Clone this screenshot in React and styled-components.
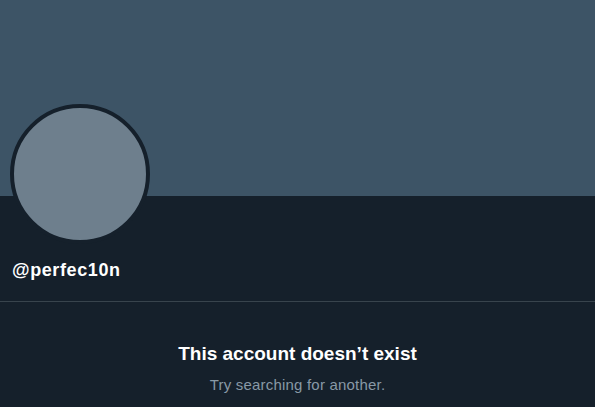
import styled, { createGlobalStyle } from "styled-components"

const Global = createGlobalStyle`
  body {
    margin: 0;
    background: #15202b;
    font-family: "Liberation Sans", Arial, sans-serif;
  }
`;

const Page = styled.div`
  width: 595px;
  height: 407px;
  background: #15202b;
  overflow: hidden;
`;

const Banner = styled.div`
  height: 196px;
  background: #3d5466;
`;

const Header = styled.div`
  padding: 0 10px 0 10px;
`;

const Avatar = styled.div`
  width: 132px;
  height: 132px;
  margin-top: -92px;
  border-radius: 50%;
  border: 4px solid #15202b;
  background: #6e7f8d;
`;

const Handle = styled.div`
  margin: 16px 0 0 2px;
  color: #ffffff;
  font-size: 18px;
  font-weight: 700;
  letter-spacing: 0.6px;
  line-height: 20px;
`;

const Divider = styled.div`
  margin-top: 21px;
  height: 1px;
  background: #38444d;
`;

const Empty = styled.div`
  display: flex;
  flex-direction: column;
  align-items: center;
  padding-top: 41px;
`;

const Title = styled.h2`
  margin: 0;
  color: #ffffff;
  font-size: 19px;
  font-weight: 700;
  line-height: 22px;
`;

const Sub = styled.p`
  margin: 11px 0 0;
  color: #8899a6;
  font-size: 15px;
  letter-spacing: 0.2px;
  line-height: 18px;
`;

function App() {
  return (
    <Page>
      <Global />
      <Banner />
      <Header>
        <Avatar />
        <Handle>@perfec10n</Handle>
      </Header>
      <Divider />
      <Empty>
        <Title>This account doesn’t exist</Title>
        <Sub>Try searching for another.</Sub>
      </Empty>
    </Page>
  );
}

export default App;
